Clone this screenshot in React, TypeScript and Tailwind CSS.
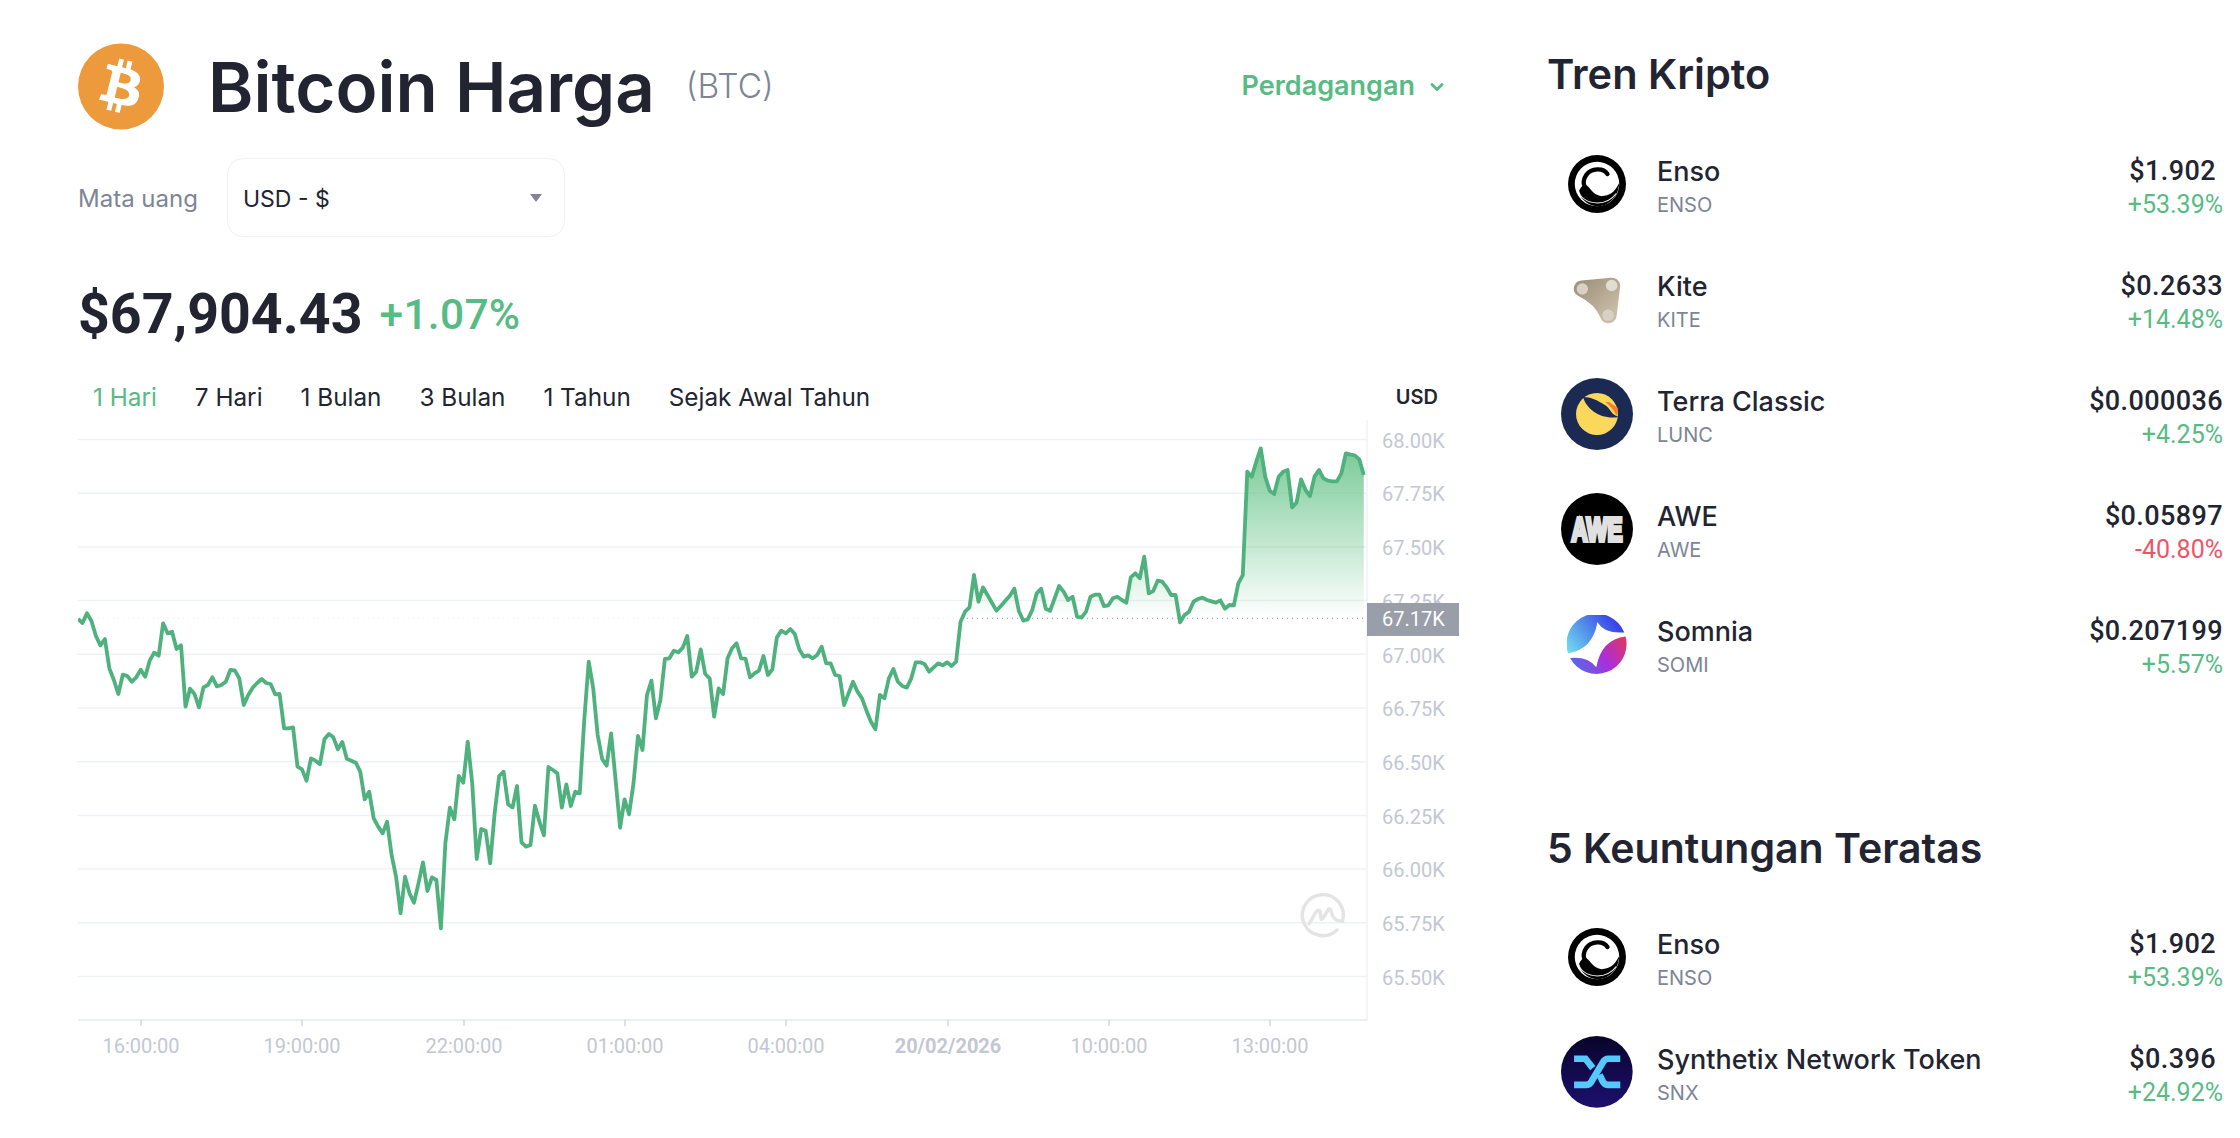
import { ChevronDown } from "lucide-react";

// y samples traced off the chart, one every 5 minutes (3x crop units)
const samples = [
  597, 609, 580, 603, 648, 676, 657, 745, 780, 822, 764, 768, 785, 772, 749, 770, 722, 698, 707, 610, 640, 635, 687, 676,
  860, 806, 822, 862, 802, 795, 772, 799, 795, 785, 750, 751, 775, 855, 825, 803, 789, 777, 789, 792, 823, 822, 925, 925,
  922, 1040, 1048, 1082, 1015, 1022, 1033, 958, 942, 952, 988, 966, 1016, 1022, 1028, 1055, 1138, 1115, 1195, 1220, 1240, 1205, 1305, 1370,
  1480, 1370, 1420, 1448, 1390, 1327, 1413, 1372, 1380, 1525, 1270, 1163, 1198, 1068, 1088, 965, 1090, 1317, 1227, 1232, 1330, 1180, 1068, 1055,
  1153, 1162, 1098, 1267, 1280, 1275, 1157, 1205, 1246, 1041, 1050, 1060, 1163, 1093, 1158, 1115, 1120, 900, 725, 805, 945, 1017, 1037, 940,
  1080, 1223, 1138, 1183, 1090, 948, 990, 825, 782, 895, 840, 717, 715, 692, 697, 683, 648, 770, 755, 688, 762, 775, 890, 805,
  822, 715, 685, 670, 715, 716, 772, 760, 752, 708, 765, 748, 652, 632, 640, 627, 642, 688, 710, 706, 715, 705, 680, 730,
  730, 765, 768, 855, 820, 785, 815, 835, 872, 905, 928, 825, 835, 775, 747, 785, 798, 803, 775, 727, 727, 733, 755, 742,
  730, 736, 727, 738, 725, 605, 575, 562, 465, 545, 502, 525, 548, 572, 558, 542, 527, 506, 572, 602, 598, 570, 520, 506,
  566, 572, 535, 498, 515, 540, 530, 590, 593, 575, 530, 524, 524, 558, 556, 535, 530, 540, 548, 472, 460, 475, 410, 520,
  513, 482, 485, 502, 525, 525, 607, 585, 575, 545, 537, 533, 540, 544, 548, 541, 566, 555, 556, 490, 465, 155, 170, 125,
  85, 170, 212, 222, 170, 155, 150, 262, 248, 178, 210, 228, 170, 150, 175, 182, 184, 184, 160, 100, 104, 106, 118, 165,
];

const points = samples.map((s, i) => [(i * 4.48).toFixed(2), (s / 3).toFixed(2)]);
const linePath = "M" + points.map((p) => p.join(" ")).join("L");
const areaPath = linePath + `L${points[points.length - 1][0]} 198.3L0 198.3Z`;

const yLabels = ["68.00K", "67.75K", "67.50K", "67.25K", "67.00K", "66.75K", "66.50K", "66.25K", "66.00K", "65.75K", "65.50K"];
const xLabels = [
  { x: 63, t: "16:00:00" },
  { x: 224, t: "19:00:00" },
  { x: 386, t: "22:00:00" },
  { x: 547, t: "01:00:00" },
  { x: 708, t: "04:00:00" },
  { x: 870, t: "20/02/2026", bold: true },
  { x: 1031, t: "10:00:00" },
  { x: 1192, t: "13:00:00" },
];

function PriceChart() {
  return (
    <svg width="1381" height="640" viewBox="0 0 1381 640" className="block font-['Roboto',sans-serif]">
      <defs>
        <linearGradient id="area" gradientUnits="userSpaceOnUse" x1="0" y1="29" x2="0" y2="198">
          <stop offset="0" stopColor="#58bd7d" stopOpacity="0.8" />
          <stop offset="1" stopColor="#58bd7d" stopOpacity="0" />
        </linearGradient>
        <clipPath id="above">
          <rect x="0" y="0" width="1289" height="198.3" />
        </clipPath>
      </defs>
      {yLabels.map((_, i) => (
        <line key={i} x1="0" x2="1289" y1={19.5 + i * 53.7} y2={19.5 + i * 53.7} stroke="#eff2f5" strokeWidth="1.5" />
      ))}
      <line x1="1289" x2="1289" y1="0" y2="600" stroke="#eff2f5" strokeWidth="1.5" />
      <line x1="0" x2="1289" y1="600" y2="600" stroke="#e6ebf1" strokeWidth="1.5" />
      {xLabels.map((l) => (
        <g key={l.t}>
          <line x1={l.x} x2={l.x} y1="600" y2="606" stroke="#c0c4cf" strokeWidth="1" />
          <text x={l.x} y="633" textAnchor="middle" fontSize="20" fontWeight={l.bold ? 700 : 400} fill="#c3c7d3">
            {l.t}
          </text>
        </g>
      ))}
      {yLabels.map((l, i) => (
        <text key={l} x="1304" y={27.7 + i * 53.7} fontSize="20" fill="#c3c7d3">
          {l}
        </text>
      ))}

      {/* watermark */}
      <g transform="translate(1245 495)" fill="none" stroke="#e4e4e4" strokeWidth="3.4" strokeLinecap="round" strokeLinejoin="round">
        <path d="M14 15A20.5 20.5 0 1 1 19.5 6" />
        <path d="M-14 9L-7 -3C-5 -6 -3 -5 -3 -3L-2 3C-2 5 -1 5 0 3L5 -5C6 -7 8 -6 8 -4C9 1 12 7 19.5 6" />
      </g>

      <line x1="0" x2="884" y1="198.3" y2="198.3" stroke="#eceef1" strokeWidth="1" strokeDasharray="1 4" />
      <line x1="884" x2="1287" y1="198.3" y2="198.3" stroke="#8f949e" strokeWidth="1" strokeDasharray="1 4" />
      <path d={areaPath} fill="url(#area)" clipPath="url(#above)" />
      <path d={linePath} fill="none" stroke="#4fb17d" strokeWidth="3.8" strokeLinejoin="round" />

      <rect x="1289" y="183" width="92" height="33" fill="#9a9ea9" />
      <text x="1304" y="206" fontSize="20" fill="#ffffff">
        67.17K
      </text>
    </svg>
  );
}

function BitcoinIcon() {
  return (
    <svg width="86" height="87" viewBox="0 0 64 64" className="shrink-0">
      <circle cx="32" cy="32" r="32" fill="#ec9a3c" />
      <path
        fill="#fff"
        d="M46.11 27.441c.636-4.258-2.606-6.547-7.039-8.074l1.438-5.768-3.512-.875-1.4 5.616c-.922-.23-1.87-.447-2.812-.662l1.41-5.653-3.509-.875-1.439 5.766c-.764-.174-1.514-.346-2.242-.527l.004-.018-4.842-1.209-.934 3.75s2.605.597 2.55.634c1.422.355 1.68 1.296 1.636 2.042l-1.638 6.571c.098.025.225.061.365.117l-.37-.092-2.297 9.205c-.174.432-.615 1.08-1.609.834.035.051-2.552-.637-2.552-.637l-1.743 4.02 4.57 1.139c.85.213 1.683.436 2.502.646l-1.453 5.835 3.507.875 1.44-5.772c.957.26 1.887.5 2.797.726L27.504 50.8l3.511.875 1.453-5.823c5.987 1.133 10.49.676 12.383-4.738 1.527-4.36-.075-6.875-3.225-8.516 2.294-.531 4.022-2.04 4.483-5.157zM38.087 38.69c-1.086 4.36-8.426 2.004-10.807 1.412l1.928-7.729c2.38.594 10.011 1.77 8.88 6.317zm1.085-11.312c-.99 3.966-7.1 1.951-9.083 1.457l1.748-7.01c1.983.494 8.367 1.416 7.335 5.553z"
      />
    </svg>
  );
}

function EnsoIcon() {
  return (
    <svg width="58" height="58" viewBox="145 76 172 172">
      <circle cx="231" cy="162" r="86" fill="#000" />
      <circle cx="231" cy="162" r="66" fill="#fff" />
      <path d="M262 132C248 112 214 116 200 134C190 148 190 162 194 168" fill="none" stroke="#000" strokeWidth="13" strokeLinecap="round" />
      <path d="M192 165C208 160 214 196 244 198C268 198 284 186 296 160C298 190 270 230 232 228C204 226 180 206 178 182C180 176 186 168 192 165Z" fill="#000" />
      <path d="M174 178C182 206 206 218 232 218C256 218 276 206 288 190" fill="none" stroke="#fff" strokeWidth="3" />
    </svg>
  );
}

function KiteIcon() {
  return (
    <svg width="50" height="49" viewBox="150 443 140 136" className="mt-[3px]">
      <defs>
        <linearGradient id="kite" x1="0" y1="0" x2="1" y2="1">
          <stop offset="0" stopColor="#a3967f" />
          <stop offset="1" stopColor="#c8bda8" />
        </linearGradient>
      </defs>
      <path d="M178 478L262 470L252 552Q232 504 178 478Z" fill="url(#kite)" stroke="url(#kite)" strokeWidth="46" strokeLinejoin="round" />
      <circle cx="179" cy="479" r="16" fill="#d9d2c4" />
      <circle cx="261" cy="469" r="16" fill="#e2dcd1" />
      <circle cx="251" cy="552" r="16" fill="#d9d2c4" />
    </svg>
  );
}

function TerraIcon() {
  return (
    <svg width="72" height="72" viewBox="0 0 72 72">
      <circle cx="36" cy="36" r="36" fill="#1b2a52" />
      <circle cx="36" cy="36" r="21" fill="#fbd75b" />
      <path d="M48 24L57 30L56 38C53 33 50 28 44 24Z" fill="#f0802e" />
      <path d="M22 19C26 32 40 42 58 39C50 37 50 31 44 27C36 22 30 19 22 19Z" fill="#1b2a52" />
    </svg>
  );
}

function AweIcon() {
  return (
    <svg width="72" height="72" viewBox="0 0 72 72">
      <circle cx="36" cy="36" r="36" fill="#000" />
      <text
        transform="translate(36 47.5) scale(1.02 1.5)"
        textAnchor="middle"
        fontSize="22"
        fontWeight="700"
        fill="#e0e0e0"
        stroke="#e0e0e0"
        strokeWidth="2.6"
        className="font-['Liberation_Sans',sans-serif]"
      >
        AWE
      </text>
    </svg>
  );
}

function SomniaIcon() {
  return (
    <svg width="60" height="60" viewBox="79 409 176 176" className="mt-[3px]">
      <defs>
        <linearGradient id="somA" gradientUnits="userSpaceOnUse" x1="90" y1="525" x2="220" y2="425">
          <stop offset="0" stopColor="#6fdcef" />
          <stop offset="0.55" stopColor="#4f86ea" />
          <stop offset="1" stopColor="#3a3fe8" />
        </linearGradient>
        <linearGradient id="somB" gradientUnits="userSpaceOnUse" x1="250" y1="480" x2="110" y2="570">
          <stop offset="0" stopColor="#dd3565" />
          <stop offset="0.5" stopColor="#a92fdc" />
          <stop offset="1" stopColor="#5a68e6" />
        </linearGradient>
      </defs>
      <path d="M168 430Q190 465 247 460A88 88 0 0 0 82 521Q155 510 168 430Z" fill="url(#somA)" />
      <path d="M251 472A88 88 0 0 1 88 535Q140 530 165 562Q180 480 251 472Z" fill="url(#somB)" />
    </svg>
  );
}

function SnxIcon() {
  return (
    <svg width="72" height="72" viewBox="63 51 215 215">
      <defs>
        <linearGradient id="snx" x1="0" y1="0" x2="0" y2="1">
          <stop offset="0" stopColor="#08042a" />
          <stop offset="1" stopColor="#1c1070" />
        </linearGradient>
      </defs>
      <circle cx="170" cy="158" r="107" fill="url(#snx)" />
      <g fill="none" stroke="#55c9f9" strokeWidth="20">
        <path d="M102 119H136L158 147" />
        <path d="M102 197H138C146 197 150 193 154 187L188 130C192 122 196 119 204 119H240" />
        <path d="M178 167L188 187C192 193 196 197 204 197H240" />
      </g>
    </svg>
  );
}

type Coin = { name: string; ticker: string; price: string; change: string; icon: React.ReactNode; inset?: boolean };

const trending: Coin[] = [
  { name: "Enso", ticker: "ENSO", price: "$1.902", change: "+53.39%", icon: <EnsoIcon />, inset: true },
  { name: "Kite", ticker: "KITE", price: "$0.2633", change: "+14.48%", icon: <KiteIcon /> },
  { name: "Terra Classic", ticker: "LUNC", price: "$0.000036", change: "+4.25%", icon: <TerraIcon /> },
  { name: "AWE", ticker: "AWE", price: "$0.05897", change: "-40.80%", icon: <AweIcon /> },
  { name: "Somnia", ticker: "SOMI", price: "$0.207199", change: "+5.57%", icon: <SomniaIcon /> },
];

const gainers: Coin[] = [
  { name: "Enso", ticker: "ENSO", price: "$1.902", change: "+53.39%", icon: <EnsoIcon />, inset: true },
  { name: "Synthetix Network Token", ticker: "SNX", price: "$0.396", change: "+24.92%", icon: <SnxIcon />, inset: true },
];

function CoinRow({ coin }: { coin: Coin }) {
  const down = coin.change.startsWith("-");
  return (
    <div className="flex h-[115px] items-center">
      <div className="ml-[14px] flex w-[72px] justify-center">{coin.icon}</div>
      <div className="ml-6 flex-1 pt-[6px]">
        <div className="text-[27px] leading-[37px] font-medium text-[#222531]">{coin.name}</div>
        <div className="text-[20px] leading-[30px] text-[#7d8596]">{coin.ticker}</div>
      </div>
      <div className="pt-[6px] text-right font-['Roboto',sans-serif]">
        <div className={`text-[27px] leading-[37px] font-medium tracking-[0.4px] text-[#222531] ${coin.inset ? "pr-[7px]" : ""}`}>
          {coin.price}
        </div>
        <div className={`text-[25px] leading-[30px] ${down ? "text-[#ef5466]" : "text-[#58bb84]"}`}>{coin.change}</div>
      </div>
    </div>
  );
}

const ranges = ["1 Hari", "7 Hari", "1 Bulan", "3 Bulan", "1 Tahun", "Sejak Awal Tahun"];

export default function App() {
  return (
    <div className="flex h-[1138px] overflow-hidden bg-white pl-[78px] font-['Inter',sans-serif] text-[#222531]">
      {/* left column */}
      <div className="w-[1381px] shrink-0 pt-[43px]">
        <div className="flex h-[87px] items-center pr-3">
          <BitcoinIcon />
          <h1 className="ml-[44px] pt-[2px] text-[69px] font-semibold leading-none">Bitcoin Harga</h1>
          <span className="ml-[31px] text-[33.5px] font-light text-[#7d8596]">(BTC)</span>
          <div className="ml-auto flex items-center gap-3 text-[27px] font-semibold text-[#58bb84]">
            Perdagangan
            <ChevronDown size={20} strokeWidth={3.5} />
          </div>
        </div>

        <div className="mt-[28px] flex items-center">
          <span className="w-[149px] pt-[3px] text-[24px] text-[#7d8596]">Mata uang</span>
          <div className="flex h-[79px] w-[338px] items-center justify-between rounded-2xl border border-[#eff2f5] pr-[22px] pl-[15px]">
            <span className="pt-[3px] text-[23px] text-[#222531]">USD - $</span>
            <span className="h-0 w-0 border-x-[6px] border-t-[8px] border-x-transparent border-t-[#7d8596]" />
          </div>
        </div>

        <div className="mt-[48px] flex h-[60px] items-center font-['Roboto',sans-serif]">
          <span className="text-[55.5px] leading-none font-bold">$67,904.43</span>
          <span className="ml-[17px] text-[42.5px] leading-none font-medium tracking-[0.3px] text-[#58bb84]">+1.07%</span>
        </div>

        <div className="mt-[34px] flex h-[36px] items-center justify-between pr-[21px] pl-[15px]">
          <div className="flex gap-[38px] text-[24.3px]">
            {ranges.map((r, i) => (
              <span key={r} className={i === 0 ? "text-[#58bb84]" : "text-[#222531]"}>
                {r}
              </span>
            ))}
          </div>
          <span className="text-[20px] font-semibold">USD</span>
        </div>

        <div className="mt-[5px]">
          <PriceChart />
        </div>
      </div>

      {/* right column */}
      <div className="ml-[88px] w-[676px] shrink-0 pt-[48px]">
        <h2 className="h-[52px] text-[41.5px] leading-[52px] font-semibold">Tren Kripto</h2>
        <div className="mt-[26px]">
          {trending.map((c) => (
            <CoinRow key={c.name} coin={c} />
          ))}
        </div>
        <h2 className="mt-[121px] h-[52px] text-[41px] leading-[52px] font-semibold">5 Keuntungan Teratas</h2>
        <div className="mt-[25px]">
          {gainers.map((c) => (
            <CoinRow key={c.name} coin={c} />
          ))}
        </div>
      </div>
    </div>
  );
}
